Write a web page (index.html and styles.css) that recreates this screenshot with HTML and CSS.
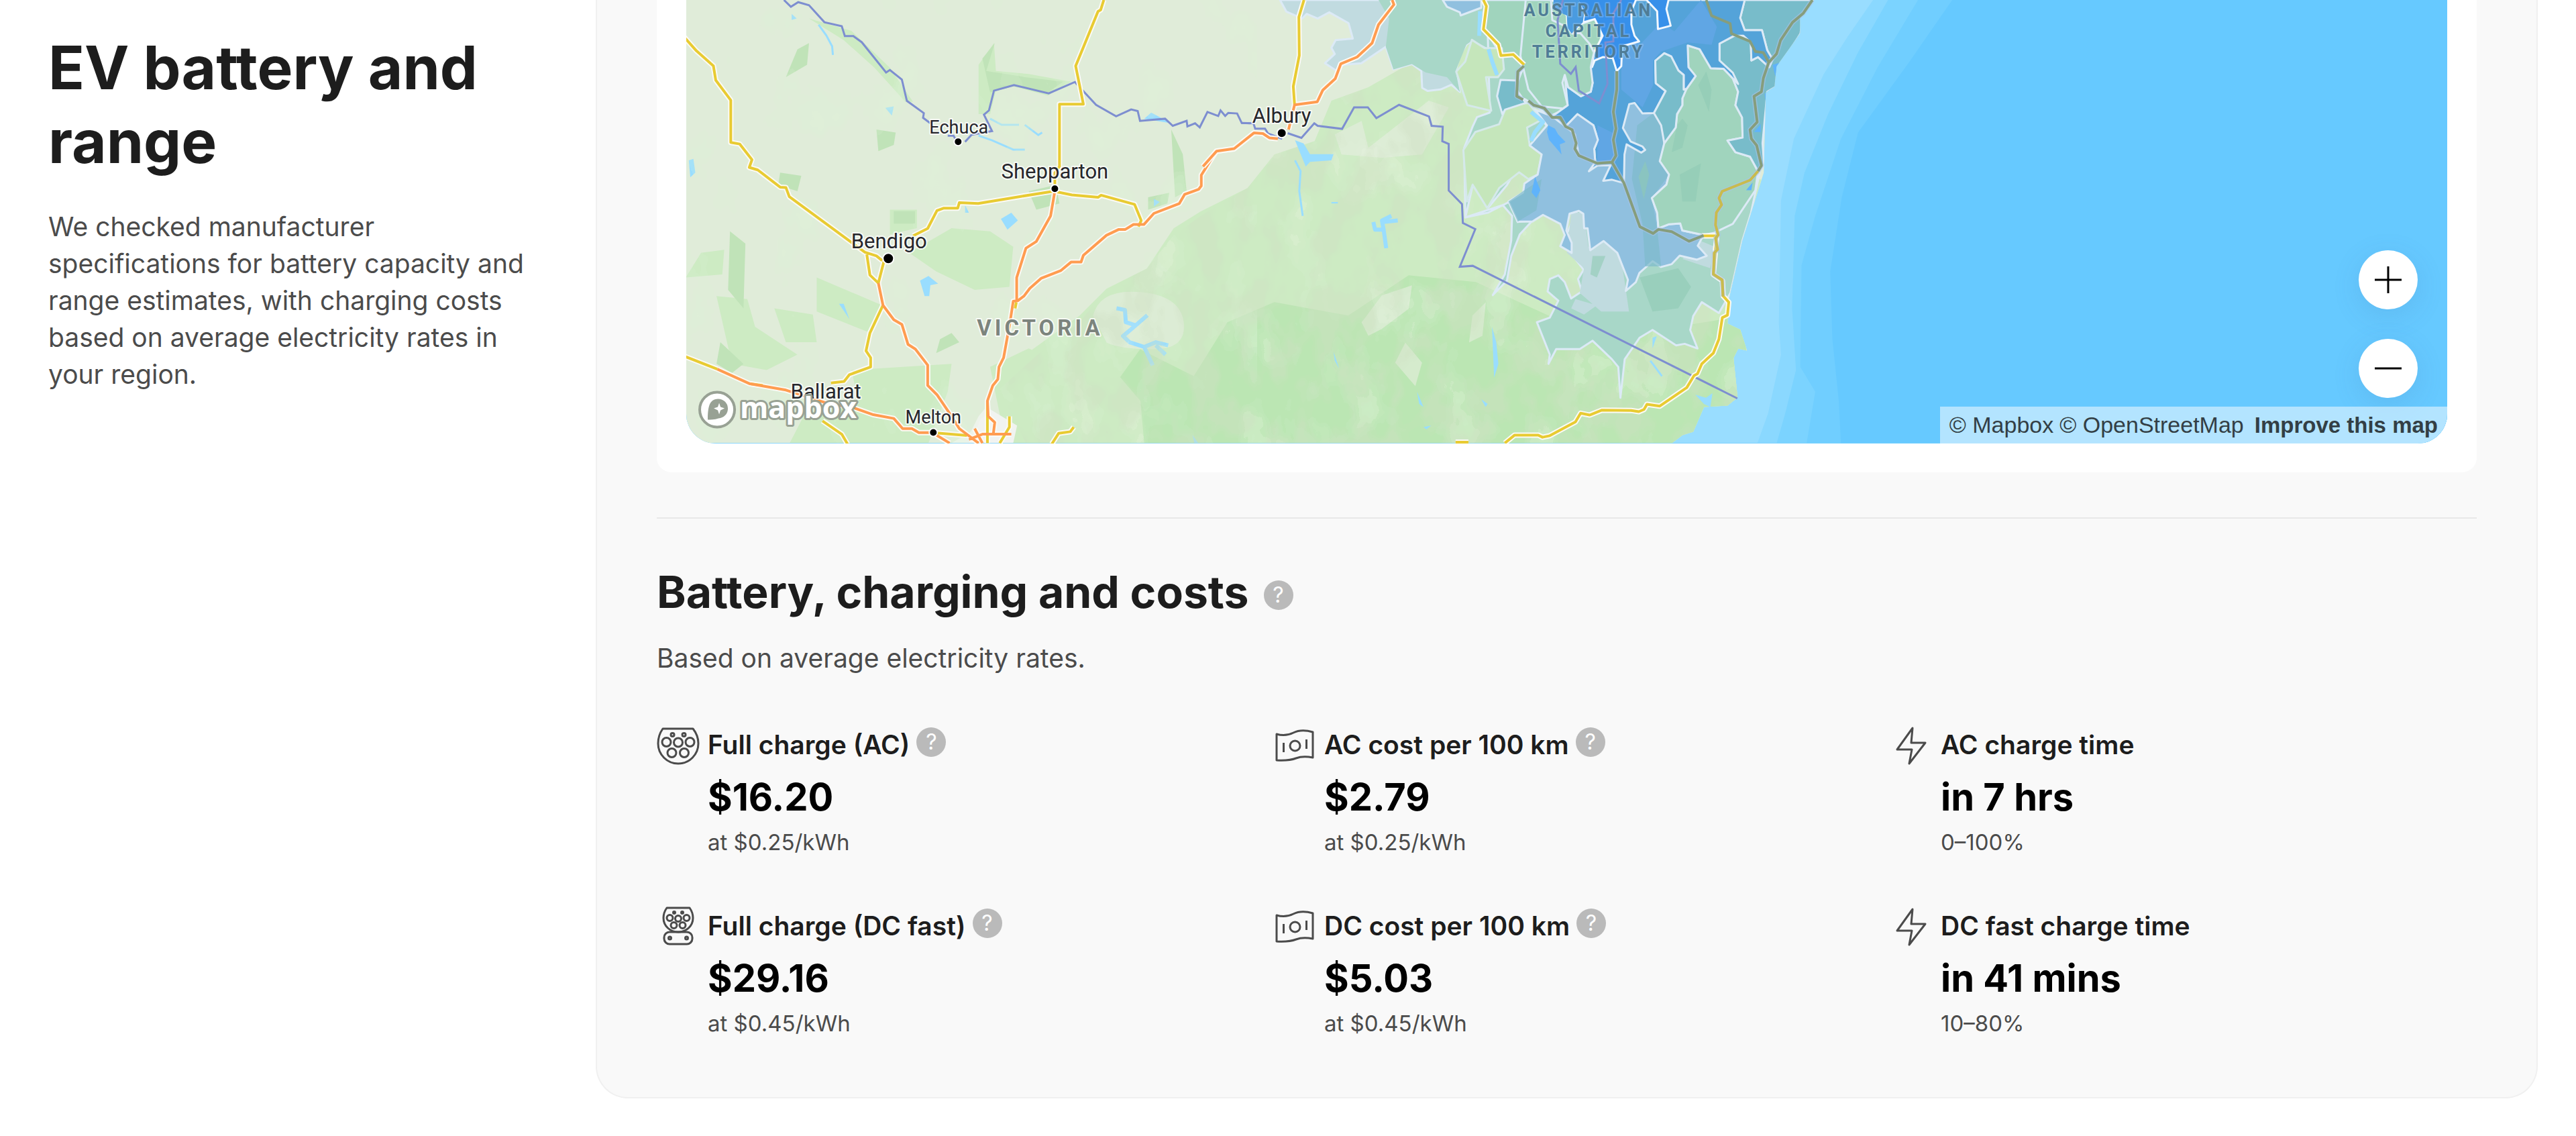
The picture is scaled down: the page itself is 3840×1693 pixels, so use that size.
FILE: index.html
```html
<!DOCTYPE html>
<html lang="en">
<head>
<meta charset="utf-8">
<meta name="viewport" content="width=device-width, initial-scale=1">
<title>EV battery and range</title>
<link rel="stylesheet" href="styles.css">
</head>
<body>
<main class="section">
  <header class="intro">
    <h1 class="intro-title">EV battery and range</h1>
    <p class="body-text">We checked manufacturer specifications for battery capacity and range estimates, with charging costs based on average electricity rates in your region.</p>
  </header>

  <div class="panel">
    <div class="map-card">
      <div class="map">
        <svg class="map-canvas" viewBox="1024 0 2623 660" role="img" aria-label="Driving range map of Victoria and southern New South Wales">
          <defs>
            <filter id="relief" x="0" y="0" width="100%" height="100%">
              <feTurbulence type="fractalNoise" baseFrequency=".022 .014" numOctaves="3" seed="8"/>
              <feColorMatrix values="0 0 0 0 .62  0 0 0 0 .74  0 0 0 0 .54  3.2 0 0 0 -1.1"/>
              <feComponentTransfer><feFuncA type="discrete" tableValues="0 0 .1 .2 .32 .44"/></feComponentTransfer>
            </filter>
            <filter id="clearing" x="0" y="0" width="100%" height="100%">
              <feTurbulence type="fractalNoise" baseFrequency=".014 .01" numOctaves="4" seed="33"/>
              <feColorMatrix values="0 0 0 0 .86  0 0 0 0 .93  0 0 0 0 .82  2.6 0 0 0 -1.1"/>
              <feComponentTransfer><feFuncA type="discrete" tableValues="0 0 .2 .35 .8 .9"/></feComponentTransfer>
            </filter>
            <filter id="pasture" x="0" y="0" width="100%" height="100%">
              <feTurbulence type="fractalNoise" baseFrequency=".013 .009" numOctaves="4" seed="21"/>
              <feColorMatrix values="0 0 0 0 .72  0 0 0 0 .9  0 0 0 0 .68  2.2 0 0 0 -.85"/>
              <feComponentTransfer><feFuncA type="discrete" tableValues="0 0 0 .35 .6 .8"/></feComponentTransfer>
            </filter>
            <clipPath id="hills"><path d="M1530 660L1490 580 1545 530 1610 480 1650 430 1710 400 1750 350 1800 315 1860 280 1900 230 1960 210 1985 150 2040 130 2110 90 2160 90 2200 55 2240 100 2700 300 2600 660Z"/></clipPath>
            <clipPath id="land"><path d="M1024 0H2704L2683 23V50L2648 99 2645 129 2632 138 2629 257 2610 317 2597 358 2578 441 2575 482 2594 491 2604 522 2591 519 2584 533 2590 592 2575 604 2540 606 2524 643 2508 648 2492 660H1024Z"/></clipPath>
          </defs>

          <!-- sea with depth bands -->
          <rect class="sea-0" x="1024" width="2623" height="660"/>
          <g transform="matrix(.6378 0 0 .4592 1800 0)">
            <path class="sea-1" d="M1555 0L1495 120 1440 240 1370 450 1340 650 1335 1050 1340 1150 1310 1340 1285 1437H2900V0Z"/>
            <path class="sea-2" d="M1590 0L1520 170 1450 370 1395 560 1372 700 1366 1000 1375 1200 1350 1340 1330 1437H2900V0Z"/>
            <path class="sea-3" d="M1660 0L1565 220 1480 450 1420 700 1388 860 1385 1190 1420 1270 1400 1437H2900V0Z"/>
            <path class="sea-4" d="M1740 0L1640 200 1520 430 1482 640 1455 880 1460 1100 1475 1300 1480 1437H2900V0Z"/>
          </g>

          <!-- land and relief -->
          <g clip-path="url(#land)">
            <rect class="land" x="1024" width="1700" height="660"/>
            <path class="green-1" d="M1530 660L1490 590 1540 520 1610 470 1650 430 1710 400 1750 340 1790 315 1860 280 1900 230 1960 210 1985 150 2040 130 2110 90 2160 90 2200 55 2240 100 2700 300 2600 660Z"/>
            <path class="green-2" d="M1490 660L1500 600 1545 560 1600 550 1650 590 1700 520 1780 560 1830 480 1900 450 2010 470 2100 410 2200 420 2330 480 2420 500 2600 470 2610 660Z"/>
            <path class="land" d="M1630 470Q1640 430 1700 435T1765 480 1720 520 1650 510ZM1990 200L2030 180 2040 220 2130 150 2160 160 2120 230 2060 235 2000 230Z" opacity=".8"/>
            <path class="land" d="M2030 480L2060 440 2105 425 2100 460 2060 490 2040 500ZM2195 470L2215 450 2210 500 2190 510ZM2095 510L2120 540 2110 575 2080 540Z" opacity=".7"/>
            <g transform="matrix(.574 0 0 .4592 960 0)">
              <path class="green-1" d="M430 60L540 100 640 220 700 330 680 330 600 220 520 130ZM870 210L910 140 915 230 1000 240 1110 265 1050 310 960 280 915 295 900 370 870 370ZM150 820L210 810 205 890 110 900ZM190 960L270 970 290 1060 400 1150 320 1200 230 1180ZM450 900L620 990 590 1080 450 1010ZM340 1000L440 1020 450 1110 370 1110ZM690 820L800 740 900 750 960 800 950 930 860 940 760 880ZM640 680H710V740L640 760ZM540 1200L800 1180 790 1270 740 1437H380L420 1340 560 1310ZM900 1190L1000 1130 1110 1190 1160 1110 1290 1300 1300 1437H940Z"/>
              <path class="green-3" d="M225 750L265 790 260 1000 220 940ZM200 1110L260 1180 230 1210 190 1180ZM400 160L430 140 425 210 370 250ZM880 190L912 140 890 230 990 250 1090 265 1050 300 960 280 900 300ZM605 420L655 430 650 470 610 490ZM355 560L410 570 400 620 350 600ZM1000 620L1070 600 1080 660 1020 680ZM1370 420L1400 500 1410 620 1380 640ZM1310 640L1365 625 1360 660 1310 680ZM770 1100L800 1080 820 1110 760 1145ZM650 685H705V725H650Z"/>
              <path class="urban" d="M870 1350L890 1320 970 1380 960 1437H800L850 1400Z"/>
              <path class="water" d="M385 45L398 60 385 65ZM628 350L650 345 645 375ZM118 520L130 515 135 560 122 575ZM928 710L955 690 972 715 945 745ZM718 910L740 895 765 920 745 925 742 960 730 960ZM508 985L520 985 535 1035ZM835 665L845 690 835 690ZM1325 645L1340 655 1325 670ZM1300 385L1318 365 1370 400ZM270 1300L285 1300 285 1315ZM1425 1410L1440 1437H1430Z"/>
              <path class="reservoir" d="M1228 1000L1250 1005 1252 1045 1278 1055 1308 1022M1278 1055L1245 1090 1262 1110 1300 1125 1330 1110 1362 1120M1300 1125L1322 1185M1330 1120L1355 1150"/>
              <path class="river" d="M455 80L475 115 490 150 492 178M900 385L930 405 975 405M990 405L1025 438 1035 430M870 440L905 455 960 485 990 485"/>
            </g>
            <rect x="1024" width="850" height="660" filter="url(#pasture)" opacity=".5"/>
            <g clip-path="url(#hills)">
              <rect x="1480" width="1150" height="660" filter="url(#clearing)" opacity=".35"/>
              <rect x="1480" width="1150" height="660" filter="url(#relief)"/>
            </g>
            <g transform="matrix(.6378 0 0 .4592 1800 0)">
              <path class="water" d="M205 455L225 465 240 500 295 500 290 520 240 525 230 540ZM290 655H305V660H290ZM295 1140L308 1195 298 1170ZM490 1270L505 1320 495 1310ZM665 1060L675 1110 680 1180 670 1225ZM1040 1095L1050 1090 1040 1130ZM1140 1280L1165 1290 1180 1275 1175 1320 1160 1310ZM640 1295L655 1310 650 1320ZM505 1385L523 1380 512 1392Z"/>
              <path class="reservoir" d="M388 720L392 745 412 745 408 715 430 700M412 745L418 805M412 720L445 715"/>
              <path class="river" d="M205 520L218 555 215 620 223 700M1035 1170L1062 1220"/>
            </g>

            <!-- reachable areas -->
            <g transform="matrix(.6378 0 0 .4592 1800 0)">
              <path class="zone pale" d="M170 0L185 38 222 60 232 45 258 60 285 40 330 75 340 125 300 130 290 155 298 175 275 205 300 228 320 210 360 205 417 152 435 225 478 208 500 230 502 285 515 295 545 290 570 275 590 298 580 230 590 180 605 145 620 130 660 160 700 0Z"/>
              <path class="teal-2" d="M400 0L425 60 417 152 435 225 478 208 510 235 560 250 590 298 580 230 605 145 620 130 660 160 690 0Z"/>
              <path class="zone steel" d="M550 0L560 22 590 40 592 50 640 25 640 0Z"/>
              <path class="zone teal-2" d="M655 100L690 130 735 210 722 320 760 350 800 420 755 470 700 600 655 675 620 600 603 705 600 480 620 410 630 380 660 365Z"/>
              <path class="zone teal-2" d="M603 705L655 690 705 655 725 720 760 715 730 760 710 830 700 910 667 957 695 890 710 780 712 700 690 665Z"/>
              <path class="zone teal-2" d="M890 600L1050 700 1200 500 1290 560 1270 690 1250 780 1222 950 1195 1015 1155 980 1135 1025 1128 1070 1145 1130 1115 1115 1095 1120 1040 1070 1010 1095 975 1165 965 1290 960 1190 945 1165 900 1105 870 1132 815 1132 797 1180 800 1150 770 1045 800 1030 820 975 795 945 800 905 820 893 835 915 850 968 875 945 866 905 879 875 860 840 830 790Z"/>
              <path class="haze" d="M850 690H880L890 800 930 780 965 820 985 1010 920 1010 870 950 880 870 840 820ZM1150 780L1185 800 1175 870 1110 840ZM860 970L910 990 880 1020 850 1000Z"/>
              <path class="shade" d="M1010 900L1100 870 1130 930 1100 1000 1040 1010ZM900 830L930 830 910 900 895 890Z"/>
            </g>
            <g transform="matrix(.3954 0 0 .3333 2140 0)">
              <path class="zone green-teal" d="M190 0L180 60 182 130 213 180 245 245 290 240 333 295 305 380 310 430 340 445 385 480 430 520 500 480 600 400 640 0Z"/>
              <path class="zone-open" d="M105 670L150 590 240 555 262 490 300 465 350 460 400 535 345 570 355 650 400 690 385 780 350 800 315 770 240 840 195 930 140 825 118 900Z"/>
              <path class="zone-open" d="M137 178L185 215 250 215 258 310 235 345 190 345 210 495 120 470 78 320 112 275Z"/>
              <path class="zone steel" d="M375 490L440 520 600 480 700 430 945 270 945 398 930 440 930 470 910 510 905 570 862 640 845 720 880 780 870 825 815 885 835 950 840 1020 880 1002 922 998 930 1030 1010 1050 988 1098 1022 1143 985 1160 920 1142 890 1180 850 1193 818 1167 768 1220 755 1260 717 1300 725 1250 685 1130 633 1077 583 1118 573 1020 560 1020 557 955 540 942 505 955 493 1030 513 1085 513 1130 470 1100 487 1050 470 1000 405 960 365 990 310 990 275 900 330 860 335 820 385 780 400 690 355 650 420 560Z"/>
              <path class="steel-dark" d="M760 560L850 480 862 640 845 720 880 780 815 885 835 1020 850 1190 790 1190 780 1000 740 800ZM275 900L335 850 400 800 380 940 310 990Z"/>
              <path class="zone green-teal" d="M945 398L980 340 953 300 950 203 995 220 1037 305 1085 307 1120 350 1140 410 1130 470 1155 525 1157 615 1100 628 1130 680 1185 700 1215 765 1205 850 1120 1000 1050 1040 1010 1050 930 1030 922 998 880 1002 840 1020 835 950 815 885 870 825 880 780 845 720 862 640 905 570 910 510 930 470 930 440Z"/>
              <path class="shade" d="M910 560L930 530 950 560 930 660 890 680ZM920 780L1000 730 980 900 930 900ZM990 380L1020 320 1040 400 1030 500ZM400 10L440 60 430 160 380 120ZM790 720L805 780 785 890 765 790Z"/>
              <path class="zone sea-teal" d="M1165 0L1148 80 1165 135 1230 135 1250 225 1270 265 1257 300 1215 255 1190 270 1188 190 1160 160 1125 160 1070 195 1070 270 1090 310 1120 350 1140 410 1130 470 1155 525 1157 615 1100 628 1130 680 1185 700 1215 765 1238 740 1232 640 1250 410 1285 385 1300 290 1375 150 1385 60 1430 0Z"/>
              <path class="zone deep" d="M535 0L560 60 555 105 600 85 630 160 597 235 585 300 580 320 592 370 585 410 548 430 500 390 487 335 498 470 440 520 490 565 535 510 595 560 612 625 598 665 602 725 578 765 610 740 660 738 632 808 665 803 710 818 712 690 720 645 775 682 790 670 780 655 735 632 706 572 730 465 750 460 780 507 823 505 867 407 830 372 828 272 862 238 888 252 915 315 935 335 935 400 945 398 980 340 953 300 950 203 995 220 1037 305 1085 307 1140 375 1120 325 1070 270 1070 195 1125 160 1160 160 1188 190 1190 270 1215 255 1257 300 1270 265 1250 225 1230 135 1165 135 1148 80 1165 0Z"/>
              <path class="zone sea-teal" d="M828 272L862 238 888 252 915 315 935 335 935 400 945 398 930 440 930 470 910 510 905 570 862 640 850 560 823 505 867 407 830 372Z"/>
              <path class="deep-2" d="M770 200L850 100 900 140 1000 0 1060 120 1040 200 950 190 850 230 820 270 820 380 780 480 700 400 700 220 767 185ZM610 560L680 600 670 720 610 720Z"/>
              <path class="zone bright" d="M440 0L495 70 497 120 513 150 555 100 600 85 630 160 597 235 590 300 600 270 630 255 668 260 683 318 700 295 703 207 767 185 750 160 738 110 738 50 755 0M535 0L560 60 555 105M795 0L835 50 838 130 886 115 870 40 878 0"/>
              <path class="zone sea-teal" d="M245 357L305 360 305 400 340 460 262 490 252 510 232 430Z"/>
              <path class="zone green-teal" d="M435 0L440 90 495 120 515 150 545 148 580 195 597 235 585 300 592 370 585 410 548 430 500 390 487 335 478 370 498 470 480 485 400 475 350 400 320 250 340 0Z"/>
              <path class="bright-fill" d="M445 0L440 40 495 70 497 125 513 150 555 100 560 60 540 0Z"/>
              <path class="zone sky" d="M490 565L535 510 595 560 612 625 598 665 602 725 540 695 525 600Z"/>
              <path class="lake" d="M425 560L450 575 462 600 490 635 468 645 475 690 450 655 428 625 420 590ZM375 790L395 850 380 885 362 860ZM1270 290L1295 280 1280 340ZM1240 420L1260 400 1245 460ZM1200 590L1225 555V590ZM1170 850L1195 815 1190 850Z"/>
              <path class="reservoir" d="M168 50L165 160M200 220L215 280 232 335M360 500L405 545 375 590 360 630"/>
              <path class="border" d="M480 0L460 90 470 285 510 330 528 300 540 405 617 462 648 375 640 190 670 185 670 60 700 0"/>
            </g>
          </g>

          <!-- roads and state border -->
          <g transform="matrix(.574 0 0 .4592 960 0)">
            <path class="border" d="M365 0L383 22 402 7 430 17 470 72 515 85 523 117 545 117 567 137 630 235 640 227 671 258 684 327 728 367 726 382 745 400M790 440H805L812 455M835 460L852 437 905 425 884 372 897 358 910 294 962 276 1052 303 1120 266 1175 340 1227 377 1266 355 1283 360 1289 392 1354 385 1374 408 1410 392 1412 410 1432 400 1444 413 1464 363 1492 376 1498 358 1510 376 1518 366 1541 368 1553 399 1575 400"/>
            <g class="casing">
              <path id="y1" d="M100 112L138 165 182 214 188 260 227 325V462L250 467 282 518 275 543 297 551 355 607 370 608 379 638 575 818 605 830 620 845M580 825L588 892 610 918 625 845M700 765L738 741 762 683 780 675H816L820 657 869 660 980 637 1065 620 1112 632 1180 640 1188 633 1275 663 1292 715 1285 735M1068 600V560L1080 540V338H1142L1122 214 1143 150 1180 37 1187 32 1195 0M622 990L588 1080 578 1138 590 1160V1190L535 1215 521 1237 487 1242M100 1152L192 1197M275 1244L310 1250M465 1365L515 1408 530 1440M750 1403L840 1412M1060 1440L1078 1405 1108 1400 1117 1385M893 1437V1300M950 1350V1385L925 1437M965 1000L968 980"/>
              <path id="o1" d="M610 918L622 990 650 1037 671 1052 687 1117 706 1132 738 1184V1250L762 1280 800 1350 820 1390 870 1437M192 1197L275 1244 370 1265 470 1305 545 1322 597 1345 650 1357 673 1390H697L715 1403H750L795 1437M1068 620L1057 700 1020 783 993 805 969 900V975M1587 430L1532 483 1487 490 1448 568V603L1441 614 1405 630 1391 660 1325 692 1299 728H1272L1251 744H1234L1202 763 1142 828 1136 850H1110L1083 878 1033 902 1003 935 988 960 972 975 960 977 951 1050 935 1160 923 1190 920 1230 907 1250 893 1300 895 1350 912 1370 908 1410M845 1425L880 1408H955M860 1390L880 1437"/>
            </g>
            <use href="#y1" class="road yellow"/>
            <use href="#o1" class="road orange"/>
          </g>
          <g transform="matrix(.6378 0 0 .4592 1800 0)">
            <path class="border" d="M80 399L108 400 112 417H135L142 433 175 450M188 432L220 447 250 400 258 408 315 418 343 348H375L395 383 448 340 518 378 524 408 550 411 549 458 564 467V618L595 662 597 723 626 743 590 865 620 862 1238 1292"/>
            <g class="casing">
              <path id="y2" d="M226 0L214 55 215 180 201 280 204 340M645 0L652 20 645 95 680 145 686 180 715 177 740 210M1155 765L1190 765 1182 890 1203 910 1205 960 1218 980 1215 1022 1203 1030 1195 1100 1182 1145 1155 1180 1145 1212 1137 1218 1120 1257 1057 1317 1027 1311 1020 1328 1008 1335 990 1331 922 1330 893 1346 872 1340 860 1368 800 1413 783 1418 773 1411H718L695 1437M580 1434H610"/>
              <path id="o2" d="M432 0L436 15 400 80 385 140 350 185 312 207 299 255 270 292 257 330 204 340 190 420M-10 540L22 490 63 482 109 431 130 433 145 447 165 450"/>
            </g>
            <use href="#y2" class="road yellow"/>
            <use href="#o2" class="road orange"/>
          </g>
          <g transform="matrix(.3954 0 0 .3333 2140 0)">
            <path class="casing soft" d="M333 295L310 320 306 430 330 445M350 450L370 470 410 483 440 525 470 525 490 565 515 580 530 640 525 665 540 695 610 730 665 725 710 818 770 1013 820 1043 840 1025 890 1035 955 1078 1010 1052M665 725L680 695 670 625 680 575 670 500 683 400V318M1420 0L1385 60 1345 100 1300 180 1285 240 1255 280 1235 350 1228 410 1200 430 1212 545 1185 580 1190 620 1210 650 1228 740 1215 765"/>
            <path class="road khaki" d="M333 295L310 320 306 430 330 445M350 450L370 470 410 483 440 525 470 525 490 565 515 580 530 640 525 665 540 695 610 730 665 725 710 818 770 1013 820 1043 840 1025 890 1035 955 1078 1010 1052M665 725L680 695 670 625 680 575 670 500 683 400V318M1420 0L1385 60 1345 100 1300 180 1285 240 1255 280 1235 350 1228 410 1200 430 1212 545 1185 580 1190 620 1210 650 1228 740 1215 765M1020 0L1040 70 1110 105 1115 150 1185 185 1205 230 1235 235 1257 280"/>
            <path class="casing soft" d="M1215 765L1185 805 1080 855 1068 885 1078 915 1058 950 1055 1005 1065 1050 1055 1065 1063 1115 1050 1130 1047 1225 1080 1250 1083 1325"/>
            <path class="road yellow olive" d="M1215 765L1185 805 1080 855 1068 885 1078 915 1058 950 1055 1005 1065 1050 1055 1065 1063 1115 1050 1130 1047 1225 1080 1250 1083 1325"/>
          </g>

          <!-- places -->
          <g class="dots">
            <circle cx="1429" cy="211" r="6"/><circle cx="1573" cy="281" r="6"/><circle cx="1325" cy="385" r="8"/>
            <circle cx="1392" cy="644" r="6"/><circle cx="1911" cy="198" r="7"/><circle cx="1232" cy="610" r="7"/>
          </g>
          <g class="labels">
            <text class="town" x="1430" y="199">Echuca</text>
            <text class="city" x="1573" y="266">Shepparton</text>
            <text class="city" x="1326" y="370">Bendigo</text>
            <text class="city" x="1911" y="183">Albury</text>
            <text class="city" x="1232" y="594">Ballarat</text>
            <text class="town" x="1392" y="631">Melton</text>
            <text class="state" x="1551" y="500">VICTORIA</text>
            <text class="territory" x="2368" y="24">AUSTRALIAN</text>
            <text class="territory" x="2368" y="55">CAPITAL</text>
            <text class="territory" x="2368" y="86">TERRITORY</text>
          </g>
          <g class="brand">
            <circle class="brand-ring" cx="1070" cy="610" r="26"/>
            <path class="brand-mark" d="M1056 625C1056 600 1061 595 1071 594A14 14 0 1 1 1072 623C1066 625 1060 625 1056 625Z"/>
            <path class="brand-star" d="M1073 600L1075 606 1081 608 1075 611 1073 617 1071 611 1065 608 1071 606Z"/>
            <text class="brand-name" x="1104" y="623">mapbox</text>
          </g>
        </svg>

        <div class="zoom">
          <button class="zoom-button" type="button" aria-label="Zoom in">
            <svg class="zoom-icon" viewBox="0 0 40 40"><path d="M20 0V40M0 20H40"/></svg>
          </button>
          <button class="zoom-button" type="button" aria-label="Zoom out">
            <svg class="zoom-icon" viewBox="0 0 40 40"><path d="M0 20H40"/></svg>
          </button>
        </div>
        <div class="attribution">
          <a href="#mapbox">© Mapbox</a>
          <a href="#osm">© OpenStreetMap</a>
          <a class="improve" href="#improve">Improve this map</a>
        </div>
      </div>
    </div>

    <hr class="divider">

    <section class="costs">
      <div class="costs-head">
        <h2 class="costs-title">Battery, charging and costs</h2>
        <button class="help" type="button" aria-label="About battery, charging and costs">?</button>
      </div>
      <p class="body-text">Based on average electricity rates.</p>

      <div class="stats">
        <article class="stat">
          <svg class="stat-icon" viewBox="0 0 64 64"><path d="M9 6H54Q62 16 62 28A30 30 0 0 1 2 28Q2 16 9 6Z"/><circle cx="23.500" cy="15" r="2.500"/><circle cx="40.500" cy="15" r="2.500"/><circle cx="14.500" cy="26" r="6.500"/><circle cx="32" cy="26.500" r="6.500"/><circle cx="49.500" cy="26" r="6.500"/><circle cx="22.500" cy="42" r="6.500"/><circle cx="41" cy="42" r="6.500"/></svg>
          <div class="stat-body">
            <div class="stat-head"><h3 class="stat-label">Full charge (AC)</h3><button class="help" type="button" aria-label="About full charge (AC)">?</button></div>
            <p class="stat-value">$16.20</p>
            <p class="stat-note">at $0.25/kWh</p>
          </div>
        </article>
        <article class="stat">
          <svg class="stat-icon" viewBox="0 0 64 64"><path d="M5 14Q18 18 30 12T59 11V49Q44 46 34 50T5 53Z"/><circle cx="32.500" cy="31.500" r="7.500"/><path d="M15.500 27V41M49.500 22V36"/></svg>
          <div class="stat-body">
            <div class="stat-head"><h3 class="stat-label">AC cost per 100 km</h3><button class="help" type="button" aria-label="About AC cost per 100 km">?</button></div>
            <p class="stat-value">$2.79</p>
            <p class="stat-note">at $0.25/kWh</p>
          </div>
        </article>
        <article class="stat">
          <svg class="stat-icon" viewBox="0 0 64 64"><path d="M34 5L11 37H33L29 58 53 27H32Z"/></svg>
          <div class="stat-body">
            <div class="stat-head"><h3 class="stat-label">AC charge time</h3></div>
            <p class="stat-value">in 7 hrs</p>
            <p class="stat-note">0–100%</p>
          </div>
        </article>
        <article class="stat">
          <svg class="stat-icon" viewBox="0 0 64 64"><path d="M15 3H49Q54 10 54 18C54 30 44 39 32 39S10 30 10 18Q10 10 15 3Z"/><circle cx="26" cy="10" r="1.500"/><circle cx="38" cy="10" r="1.500"/><circle cx="19.500" cy="18" r="4.500"/><circle cx="32" cy="19" r="4.500"/><circle cx="44.500" cy="18" r="4.500"/><circle cx="25.500" cy="29" r="4.500"/><circle cx="38.500" cy="29" r="4.500"/><rect x="11" y="39" width="42" height="18" rx="8"/><circle cx="19.500" cy="48" r="2"/><circle cx="44.500" cy="48" r="2"/></svg>
          <div class="stat-body">
            <div class="stat-head"><h3 class="stat-label">Full charge (DC fast)</h3><button class="help" type="button" aria-label="About full charge (DC fast)">?</button></div>
            <p class="stat-value">$29.16</p>
            <p class="stat-note">at $0.45/kWh</p>
          </div>
        </article>
        <article class="stat">
          <svg class="stat-icon" viewBox="0 0 64 64"><path d="M5 14Q18 18 30 12T59 11V49Q44 46 34 50T5 53Z"/><circle cx="32.500" cy="31.500" r="7.500"/><path d="M15.500 27V41M49.500 22V36"/></svg>
          <div class="stat-body">
            <div class="stat-head"><h3 class="stat-label">DC cost per 100 km</h3><button class="help" type="button" aria-label="About DC cost per 100 km">?</button></div>
            <p class="stat-value">$5.03</p>
            <p class="stat-note">at $0.45/kWh</p>
          </div>
        </article>
        <article class="stat">
          <svg class="stat-icon" viewBox="0 0 64 64"><path d="M34 5L11 37H33L29 58 53 27H32Z"/></svg>
          <div class="stat-body">
            <div class="stat-head"><h3 class="stat-label">DC fast charge time</h3></div>
            <p class="stat-value">in 41 mins</p>
            <p class="stat-note">10–80%</p>
          </div>
        </article>
      </div>
    </section>
  </div>
</main>
</body>
</html>
```
FILE: styles.css
```css
* { box-sizing: border-box; }
body {
  margin: 0;
  background: #fff;
  color: #1d1d1d;
  font-family: Inter, "Liberation Sans", sans-serif;
}
h1, h2, h3, p { margin: 0; }
button { padding: 0; border: 0; font: inherit; cursor: pointer; }

.section {
  display: grid;
  grid-template-columns: 728px minmax(0, 1fr);
  column-gap: 88px;
  align-items: start;
  padding: 0 57px 0 72px;
}

.intro { padding-top: 46px; }
.intro-title {
  margin-bottom: 44px;
  font-size: 89px;
  font-weight: 700;
  line-height: 110px;
}
.body-text { color: #4b4b4b; font-size: 39px; line-height: 55px; }

.panel {
  padding: 0 89px 88px;
  border: 2px solid #f0f0f0;
  border-top: 0;
  border-radius: 0 0 48px 48px;
  background: #f9f9f9;
}

/* Map */
.map-card {
  padding: 0 44px 43px;
  border-radius: 0 0 22px 22px;
  background: #fff;
}
.map {
  position: relative;
  overflow: hidden;
  border-radius: 0 0 44px 44px;
  background: #66c9ff;
}
.map-canvas { display: block; width: 100%; height: auto; }
.map-canvas path, .map-canvas use { vector-effect: non-scaling-stroke; }
.sea-0 { fill: #99ddff; }
.sea-1 { fill: #8ad8ff; }
.sea-2 { fill: #7bd3ff; }
.sea-3 { fill: #70ceff; }
.sea-4 { fill: #66c9ff; }
.land { fill: #e0ecd9; }
.green-1 { fill: #cdebc3; }
.green-2 { fill: #bbe6b3; }
.green-3 { fill: #c0e3b8; }
.urban { fill: #f1f3f0; }
.water { fill: #99ddff; }
.lake { fill: #5fb3fb; }
.river { fill: none; stroke: #99ddff; stroke-width: 3; }
.reservoir { fill: none; stroke: #99ddff; stroke-width: 6; stroke-linejoin: round; }
.zone { stroke: #dceaf6; stroke-width: 3; stroke-linejoin: round; }
.zone-open { fill: #c5e6bb; stroke: #d5e9ea; stroke-width: 3; stroke-linejoin: round; }
.pale { fill: #c1dbe0; }
.teal-2 { fill: #a8d7c8; }
.haze { fill: #c0dbdf; }
.shade { fill: #8fcab4; opacity: .6; }
.green-teal { fill: #a0d4bd; }
.steel { fill: #90c0df; }
.steel-dark { fill: #7dbbcb; opacity: .7; }
.sea-teal { fill: #78bcca; }
.deep { fill: #54a3d9; }
.deep-2 { fill: #60a6e4; }
.bright { fill: #3790ea; stroke: #f2f8ff; }
.bright-fill { fill: #4a9be0; }
.sky { fill: #8bbce1; }
.border { fill: none; stroke: #7d8ed0; stroke-width: 3; }
.casing { fill: none; stroke: #fbfaf5; stroke-width: 8; stroke-linejoin: round; }
.soft { stroke: #a9c4e8; stroke-width: 7; opacity: .6; }
.road { fill: none; stroke-width: 4; stroke-linejoin: round; }
.yellow { stroke: #e8cb32; }
.olive { stroke: #c9bb4e; }
.orange { stroke: #ff9c50; }
.khaki { stroke: #869d7c; }

.dots { stroke: #fff; stroke-width: 2; }
.labels { font-family: Roboto, "Noto Sans", sans-serif; text-anchor: middle; fill: #26262c; }
.labels text { paint-order: stroke; stroke: rgba(255, 255, 255, .75); stroke-width: 4; stroke-linejoin: round; }
.town { font-size: 27px; }
.city { font-size: 31px; }
.labels .state { fill: #7c847d; font-size: 33px; font-weight: 700; letter-spacing: 5px; }
.labels .territory { fill: #4f7c96; stroke: rgba(255, 255, 255, .2); font-size: 25px; font-weight: 700; letter-spacing: 4px; }
.brand-ring { fill: #fff; stroke: #98a194; stroke-width: 4; }
.brand-mark { fill: #98a194; }
.brand-star { fill: #fff; }
.brand-name {
  fill: #fff;
  stroke: #98a194;
  stroke-width: 6;
  stroke-linejoin: round;
  paint-order: stroke;
  font: 700 43px "Open Sans", sans-serif;
}

.zoom {
  position: absolute;
  right: 44px;
  bottom: 68px;
  display: grid;
  gap: 44px;
}
.zoom-button {
  display: grid;
  place-items: center;
  width: 88px;
  height: 88px;
  border-radius: 50%;
  background: #fff;
  box-shadow: 0 10px 40px rgba(60, 110, 170, .16);
}
.zoom-icon { width: 40px; height: 40px; fill: none; stroke: #000; stroke-width: 3; }
.attribution {
  position: absolute;
  right: 0;
  bottom: 0;
  display: flex;
  align-items: center;
  gap: 9px;
  height: 55px;
  padding: 0 14px;
  background: rgba(255, 255, 255, .5);
  font: 34px/55px "Liberation Sans", sans-serif;
}
.attribution a { color: #333f45; text-decoration: none; }
.attribution .improve { margin-left: 7px; font-size: 33px; font-weight: 700; }

.divider { height: 2px; margin: 67px 0 65px; border: 0; background: #e8e8e8; }

/* Costs */
.costs-head { display: flex; align-items: center; gap: 22px; margin-bottom: 27px; }
.costs-head .help { margin-top: 10px; }
.costs-title { font-size: 66px; font-weight: 700; line-height: 88px; }
.help {
  flex: none;
  width: 44px;
  height: 44px;
  border-radius: 50%;
  background: #bababa;
  color: #fff;
  font-size: 32px;
  line-height: 44px;
  text-align: center;
}
.stats {
  display: grid;
  grid-template-columns: repeat(3, minmax(0, 1fr));
  gap: 75px 44px;
  margin-top: 74px;
}
.stat { display: flex; gap: 12px; }
.stat-icon {
  flex: none;
  width: 64px;
  height: 64px;
  margin-top: -2px;
  fill: none;
  stroke: #4b4b4b;
  stroke-width: 3;
  stroke-linejoin: round;
}
.stat-head { display: flex; align-items: center; gap: 10px; height: 55px; }
.stat-head .help { margin-bottom: 6px; }
.stat-label { font-size: 39px; font-weight: 600; line-height: 55px; }
.stat-value { margin-top: 7px; color: #000; font-size: 56px; font-weight: 700; line-height: 88px; }
.stat-note { margin-top: 1px; color: #4b4b4b; font-size: 33px; line-height: 44px; }
```
